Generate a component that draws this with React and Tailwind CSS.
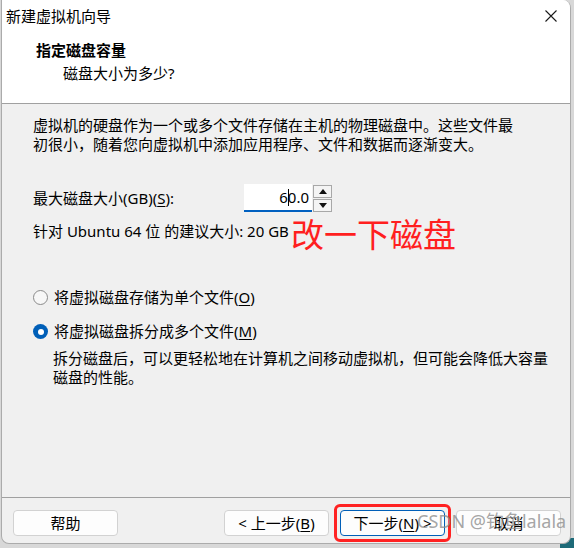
function Key({ k }) {
  return (
    <>
      (<span className="underline underline-offset-[2px]">{k}</span>)
    </>
  )
}

function Radio({ checked }) {
  if (checked) {
    return (
      <span className="flex h-[15px] w-[15px] shrink-0 items-center justify-center rounded-full bg-[#005fb8]">
        <span className="h-[6px] w-[6px] rounded-full bg-white" />
      </span>
    )
  }
  return <span className="h-[15px] w-[15px] shrink-0 rounded-full border border-[#8a8a8a] bg-[#f7f7f7]" />
}

function Btn({ children, primary }) {
  return (
    <div
      className={`flex h-[26px] w-[105px] items-center justify-center rounded-[4px] border bg-[#fdfdfd] ${
        primary ? 'border-[#005fb8]' : 'border-[#d2d2d2]'
      }`}
    >
      {children}
    </div>
  )
}

function Arrow({ up }) {
  return (
    <svg width="8" height="5" viewBox="0 0 8 5">
      <path d={up ? 'M0 5 L4 0 L8 5 Z' : 'M0 0 L4 5 L8 0 Z'} fill="#111" />
    </svg>
  )
}

export default function App() {
  return (
    <div className="relative h-[548px] w-[574px] overflow-hidden bg-[#d8d8d8] font-['Noto_Sans','Noto_Sans_CJK_SC',sans-serif] text-[15px] text-black">
      <div className="absolute bottom-0 right-0 h-[10px] w-[14px] bg-[#1d6a78]" />

      <div className="relative ml-[1px] flex h-[544px] w-[570px] flex-col overflow-hidden rounded-b-[8px] rounded-tr-[8px] border border-t-0 border-[#ababab] bg-[#f0f0f0]">
        {/* title + header */}
        <div className="border-b border-[#a0a0a0] bg-white">
          <div className="flex h-[32px] items-center justify-between pl-[4px] pr-[13px]">
            <span className="leading-[20px]">新建虚拟机向导</span>
            <svg width="12" height="12" viewBox="0 0 12 12">
              <path d="M0.5 0.5 L11.5 11.5 M11.5 0.5 L0.5 11.5" stroke="#1a1a1a" strokeWidth="1.1" />
            </svg>
          </div>
          <div className="pl-[34px] pt-[8px] font-bold leading-[20px]">指定磁盘容量</div>
          <div className="mt-[3px] pb-[20px] pl-[61px] leading-[20px]">磁盘大小为多少?</div>
        </div>

        {/* body */}
        <div className="flex-1 pl-[31px] pt-[12px]">
          <p className="whitespace-nowrap leading-[19px]">
            虚拟机的硬盘作为一个或多个文件存储在主机的物理磁盘中。这些文件最
            <br />
            初很小，随着您向虚拟机中添加应用程序、文件和数据而逐渐变大。
          </p>

          <div className="mt-[30px] flex h-[28px] items-center">
            <span className="w-[211px] leading-[19px]">
              最大磁盘大小(GB)<Key k="S" />:
            </span>
            <div className="flex h-[28px] w-[68px] items-center justify-end border-b-2 border-[#0060c0] bg-white pr-[3px]">
              <span className="leading-[19px]">6</span>
              <span className="-mr-px h-[17px] w-px bg-black" />
              <span className="leading-[19px]">0.0</span>
            </div>
            <div className="ml-[1px] flex h-[27px] w-[19px] flex-col gap-[1px]">
              <div className="flex h-[13px] items-center justify-center border border-[#a8a8a8] bg-[#f4f4f4]">
                <Arrow up />
              </div>
              <div className="flex h-[13px] items-center justify-center border border-[#a8a8a8] bg-[#f4f4f4]">
                <Arrow />
              </div>
            </div>
          </div>

          <div className="mt-[10px] leading-[19px]">针对 Ubuntu 64 位 的建议大小: 20 GB</div>

          <div className="mt-[47px] flex h-[19px] items-center gap-[6px]">
            <Radio />
            <span className="leading-[19px]">
              将虚拟磁盘存储为单个文件<Key k="O" />
            </span>
          </div>
          <div className="mt-[15px] flex h-[19px] items-center gap-[6px]">
            <Radio checked />
            <span className="leading-[19px]">
              将虚拟磁盘拆分成多个文件<Key k="M" />
            </span>
          </div>
          <p className="mt-[8px] whitespace-nowrap pl-[20px] leading-[19px]">
            拆分磁盘后，可以更轻松地在计算机之间移动虚拟机，但可能会降低大容量
            <br />
            磁盘的性能。
          </p>
        </div>

        {/* buttons */}
        <div className="flex h-[46px] items-start border-t border-[#a0a0a0] pl-[11px] pr-[9px] pt-[12px]">
          <Btn>帮助</Btn>
          <div className="flex-1" />
          <div className="flex gap-[11px]">
            <Btn>
              &lt; 上一步<Key k="B" />
            </Btn>
            <div className="relative">
              <Btn primary>
                下一步<Key k="N" /> &gt;
              </Btn>
              <div className="absolute -bottom-[6px] -left-[6px] -right-[6px] -top-[6px] rounded-[6px] border-[3px] border-[#ff2222]" />
            </div>
            <Btn>取消</Btn>
          </div>
        </div>

        <div className="absolute left-[289px] top-[216px] text-[33px] leading-[38px] text-[#ff1f1f]">改一下磁盘</div>
      </div>

      <div className="absolute left-[417px] top-[509px] text-[18px] leading-[24px] text-[#8e8e8e]/80">CSDN @钓鱼lalala</div>
    </div>
  )
}
